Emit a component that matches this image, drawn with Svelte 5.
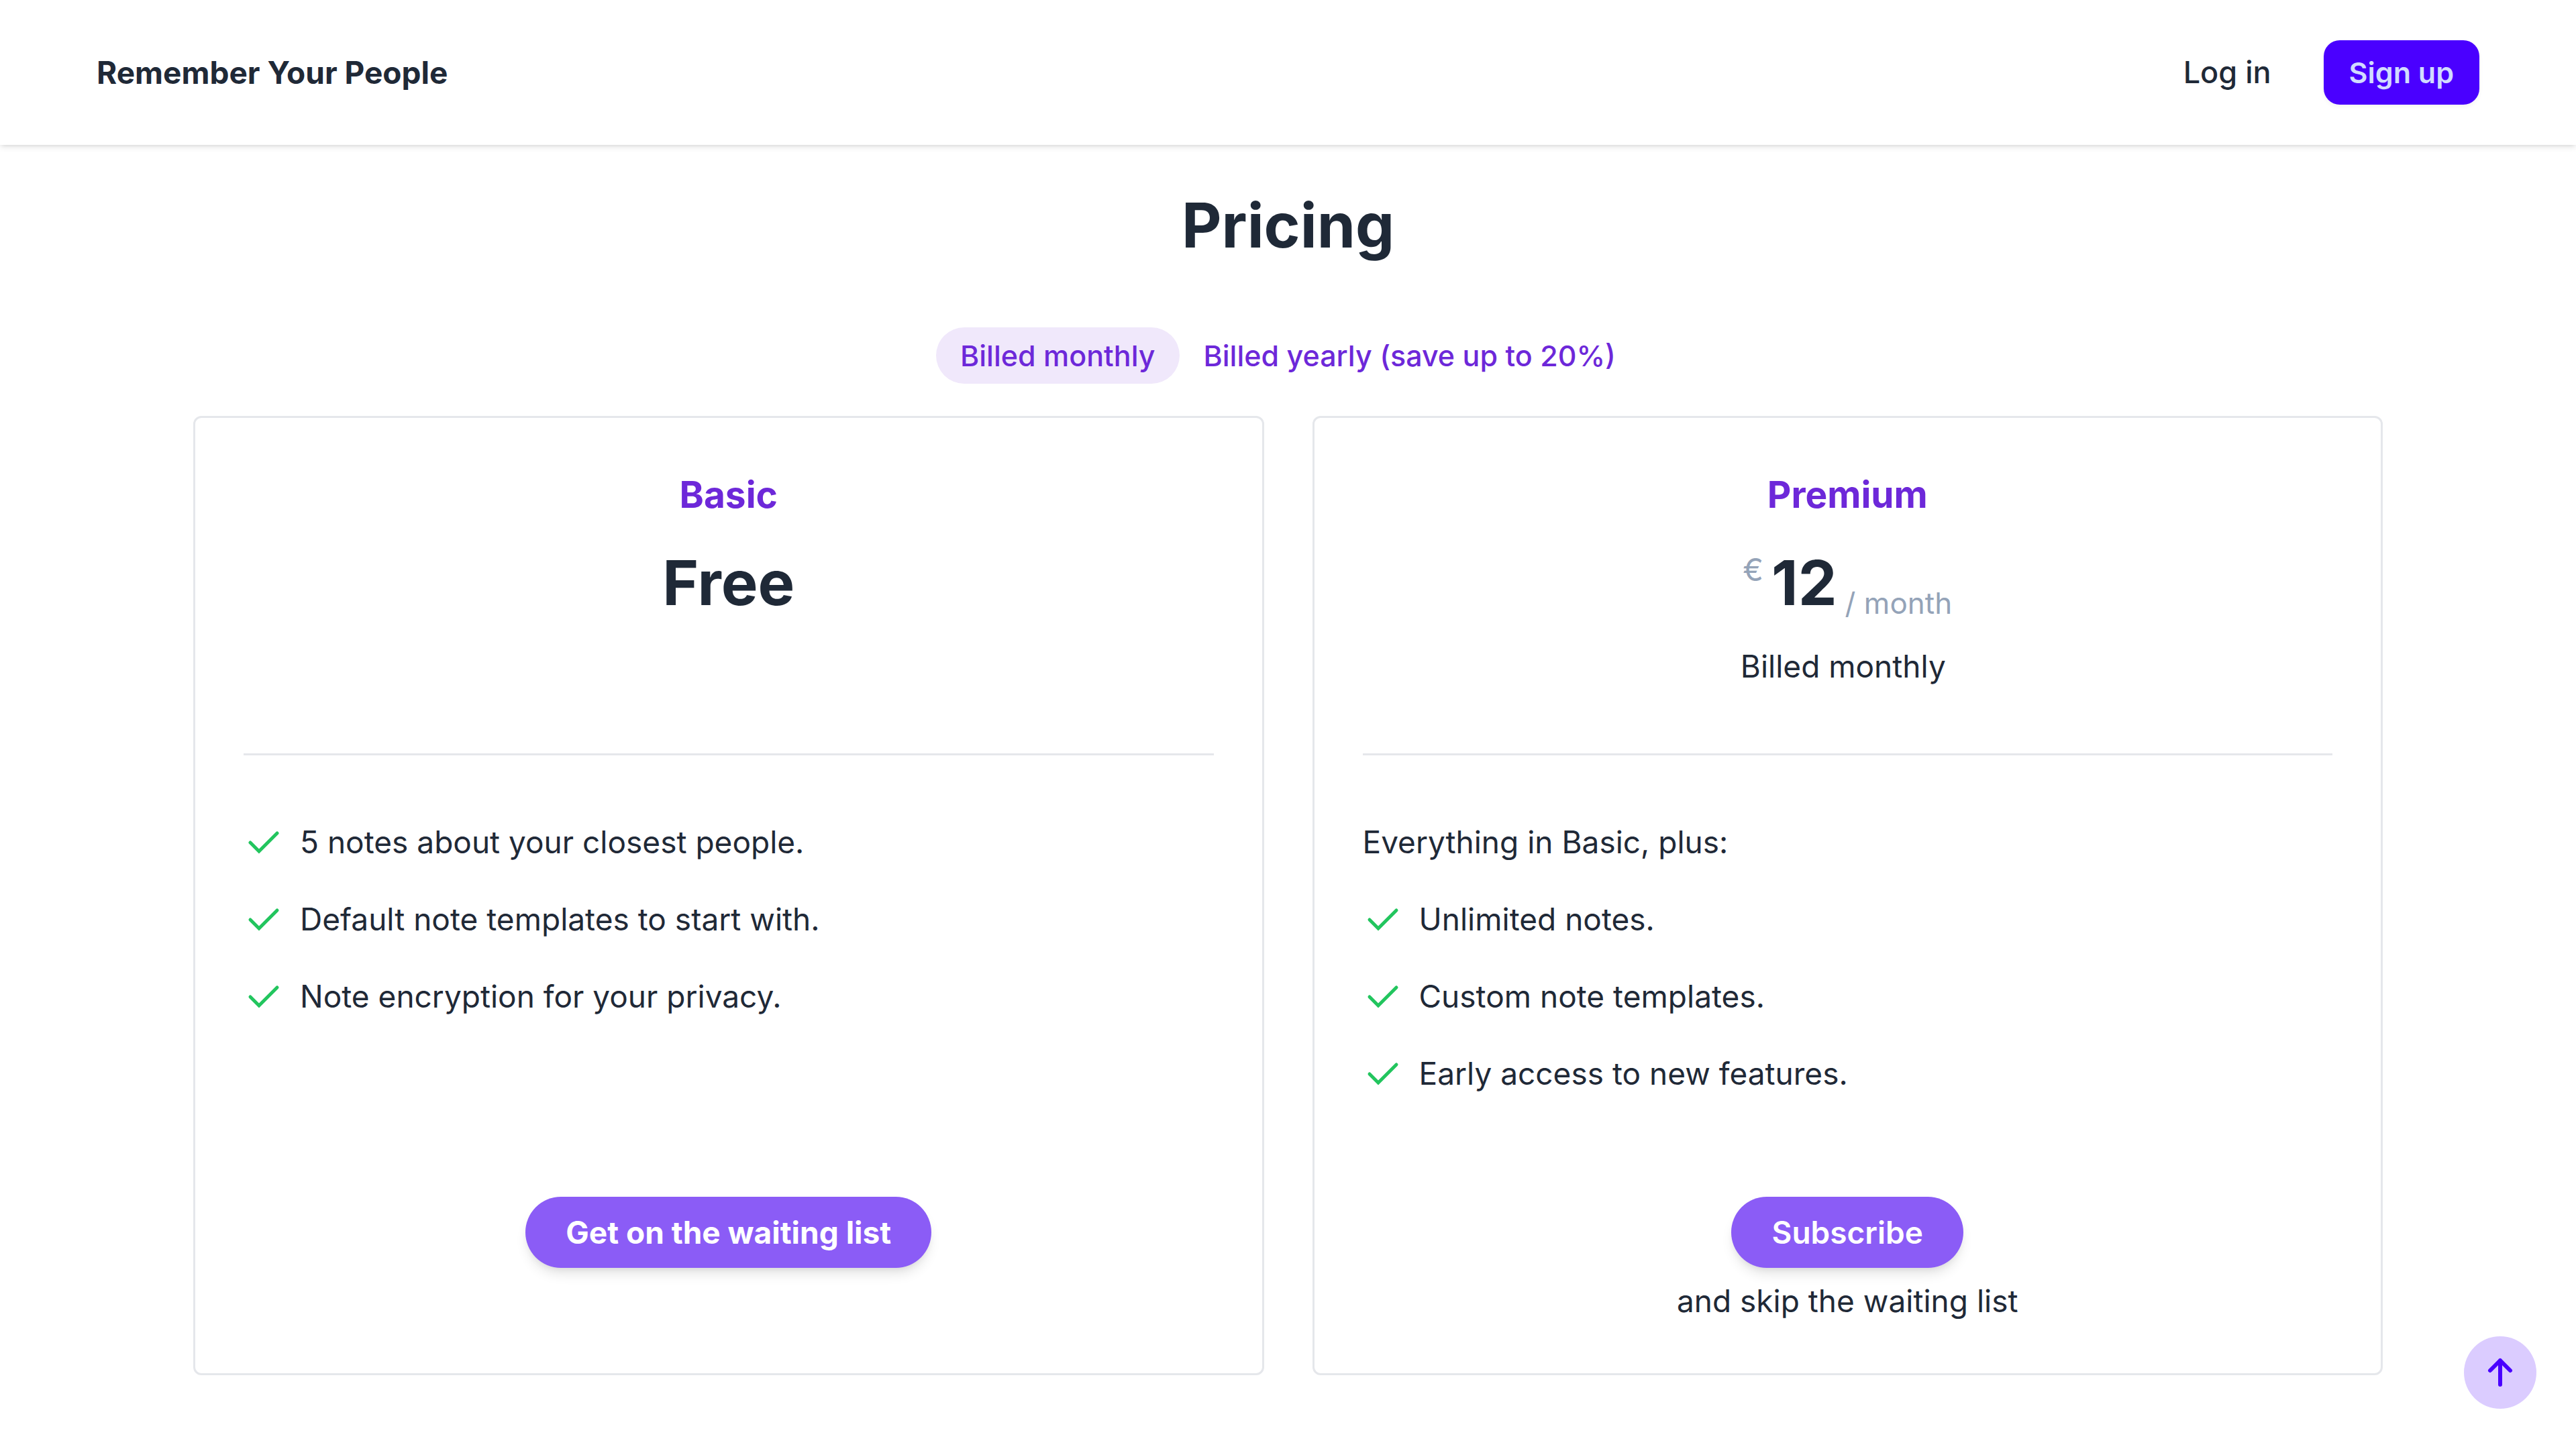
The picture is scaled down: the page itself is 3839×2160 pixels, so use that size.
<script>
  const plans = [
    {
      name: 'Basic',
      price: 'Free',
      intro: '',
      features: [
        '5 notes about your closest people.',
        'Default note templates to start with.',
        'Note encryption for your privacy.',
      ],
      action: 'Get on the waiting list',
      strong: true,
      note: '',
    },
    {
      name: 'Premium',
      currency: '€',
      price: '12',
      period: '/ month',
      billing: 'Billed monthly',
      intro: 'Everything in Basic, plus:',
      features: ['Unlimited notes.', 'Custom note templates.', 'Early access to new features.'],
      action: 'Subscribe',
      strong: false,
      note: 'and skip the waiting list',
    },
  ];
  let yearly = $state(false);
</script>

<header class="bar">
  <a class="brand" href="#home">Remember Your People</a>
  <nav class="nav">
    <a class="login" href="#login">Log in</a>
    <a class="signup" href="#signup">Sign up</a>
  </nav>
</header>

<main>
  <h1>Pricing</h1>

  <div class="toggle">
    <button type="button" class:active={!yearly} onclick={() => (yearly = false)}>Billed monthly</button>
    <button type="button" class:active={yearly} onclick={() => (yearly = true)}>Billed yearly (save up to 20%)</button>
  </div>

  <div class="plans">
    {#each plans as plan}
      <section class="card">
        <div class="head">
          <h2>{plan.name}</h2>
          <p class="price">
            {#if plan.currency}<span class="currency">{plan.currency}</span>{/if}
            <strong>{plan.price}</strong>
            {#if plan.period}<span class="period">{plan.period}</span>{/if}
          </p>
          {#if plan.billing}<p class="billing">{plan.billing}&nbsp;</p>{/if}
        </div>
        <div class="body">
          {#if plan.intro}<p>{plan.intro}</p>{/if}
          <ul>
            {#each plan.features as feature}
              <li>
                <svg viewBox="0 0 60 60" aria-hidden="true"><path d="M10 31l13 13 27-27" /></svg>
                <span>{feature}</span>
              </li>
            {/each}
          </ul>
        </div>
        <div class="foot">
          <button type="button" class="cta" class:strong={plan.strong}>{plan.action}</button>
          {#if plan.note}<p>{plan.note}</p>{/if}
        </div>
      </section>
    {/each}
  </div>
</main>

<button type="button" class="top" aria-label="Back to top">
  <svg viewBox="0 0 54 54" aria-hidden="true"><path d="M12 24l15-15 15 15M27 9v36" /></svg>
</button>

<style>
  :global(body) {
    background: #fff;
  }
  :global(#app) {
    font-family: Inter, 'Liberation Sans', sans-serif;
    font-size: 46px;
    line-height: 72px;
    color: #1f2937;
  }
  h1,
  h2,
  p,
  ul {
    margin: 0;
    padding: 0;
    font-size: inherit;
  }
  a {
    color: inherit;
    text-decoration: none;
  }
  button {
    border: 0;
    background: none;
    font: inherit;
    color: inherit;
    cursor: pointer;
  }
  .bar {
    display: flex;
    justify-content: space-between;
    align-items: center;
    padding: 60px 144px;
    box-shadow: 0 3px 9px rgba(0, 0, 0, 0.1), 0 3px 6px -3px rgba(0, 0, 0, 0.1);
  }
  .brand {
    font-weight: 700;
  }
  .nav {
    display: flex;
    align-items: center;
    gap: 78px;
  }
  .login {
    font-size: 45px;
    font-weight: 500;
  }
  .signup {
    padding: 12px 38px;
    border-radius: 24px;
    background: #4a00ff;
    color: #d1dbff;
    font-size: 43px;
    font-weight: 600;
    box-shadow: 0 3px 6px rgba(0, 0, 0, 0.05);
  }
  main {
    padding: 72px 288px 110px;
  }
  h1 {
    text-align: center;
    font-size: 92px;
    line-height: 96px;
    font-weight: 700;
  }
  .toggle {
    display: flex;
    justify-content: center;
    margin: 104px 0 48px;
  }
  .toggle button {
    padding: 12px 36px;
    border-radius: 42px;
    font-size: 43px;
    line-height: 60px;
    font-weight: 500;
    color: #6d28d9;
  }
  .toggle .active {
    background: #f0e8fb;
  }
  .plans {
    display: grid;
    grid-template-columns: 1fr 1fr;
    gap: 72px;
  }
  .card {
    display: flex;
    flex-direction: column;
    padding: 72px;
    border: 3px solid #e5e7eb;
    border-radius: 12px;
  }
  .head {
    min-height: 428px;
    border-bottom: 3px solid #e5e7eb;
    text-align: center;
  }
  h2 {
    margin-bottom: 18px;
    font-size: 55px;
    line-height: 84px;
    font-weight: 700;
    color: #6d28d9;
  }
  .price {
    display: flex;
    justify-content: center;
    gap: 12px;
    line-height: 144px;
  }
  .price strong {
    font-size: 92px;
    font-weight: 700;
  }
  .currency {
    font-size: 46px;
    line-height: 104px;
    color: #94a3b8;
  }
  .period {
    align-self: flex-end;
    font-size: 44px;
    line-height: 84px;
    color: #94a3b8;
  }
  .billing {
    margin-top: 16px;
  }
  .body {
    display: flex;
    flex-direction: column;
    gap: 43px;
    padding: 93px 0 148px;
  }
  ul {
    display: flex;
    flex-direction: column;
    gap: 43px;
    list-style: none;
  }
  li {
    display: flex;
    align-items: center;
    gap: 24px;
  }
  li svg {
    width: 60px;
    height: 60px;
    fill: none;
    stroke: #22c55e;
    stroke-width: 5;
    stroke-linecap: round;
  }
  .foot {
    display: flex;
    flex-direction: column;
    align-items: center;
    gap: 13px;
    min-height: 191px;
    margin-top: auto;
  }
  .cta {
    padding: 17px 60px;
    border-radius: 53px;
    background: #8b5cf6;
    color: #fff;
    font-weight: 600;
    box-shadow: 0 12px 18px -3px rgba(0, 0, 0, 0.1), 0 6px 12px -6px rgba(0, 0, 0, 0.1);
  }
  .strong {
    font-weight: 700;
  }
  .top {
    position: fixed;
    right: 59px;
    bottom: 60px;
    display: grid;
    place-items: center;
    width: 108px;
    height: 108px;
    padding: 0;
    border-radius: 50%;
    background: #dbccff;
  }
  .top svg {
    width: 54px;
    height: 54px;
    fill: none;
    stroke: #4a00ff;
    stroke-width: 6;
    stroke-linecap: round;
    stroke-linejoin: round;
  }
</style>
